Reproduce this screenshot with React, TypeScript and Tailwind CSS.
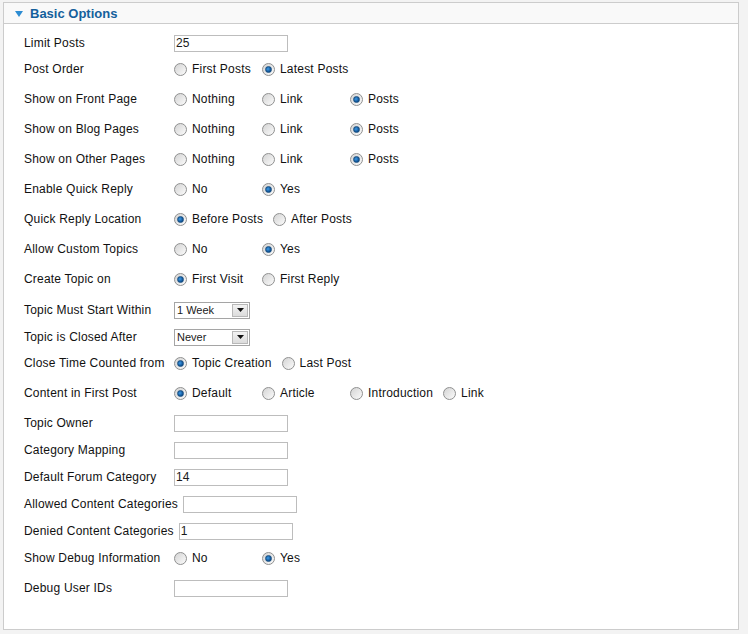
import React from "react";

type Row =
  | { label: string; kind: "text"; value?: string; h: string }
  | { label: string; kind: "select"; value: string; h: string }
  | { label: string; kind: "radio"; options: string[]; checked: number; h: string };

const ROWS: Row[] = [
  { label: "Limit Posts", kind: "text", value: "25", h: "h-[26px]" },
  { label: "Post Order", kind: "radio", options: ["First Posts", "Latest Posts"], checked: 1, h: "h-[30px]" },
  { label: "Show on Front Page", kind: "radio", options: ["Nothing", "Link", "Posts"], checked: 2, h: "h-[30px]" },
  { label: "Show on Blog Pages", kind: "radio", options: ["Nothing", "Link", "Posts"], checked: 2, h: "h-[30px]" },
  { label: "Show on Other Pages", kind: "radio", options: ["Nothing", "Link", "Posts"], checked: 2, h: "h-[30px]" },
  { label: "Enable Quick Reply", kind: "radio", options: ["No", "Yes"], checked: 1, h: "h-[30px]" },
  { label: "Quick Reply Location", kind: "radio", options: ["Before Posts", "After Posts"], checked: 0, h: "h-[30px]" },
  { label: "Allow Custom Topics", kind: "radio", options: ["No", "Yes"], checked: 1, h: "h-[30px]" },
  { label: "Create Topic on", kind: "radio", options: ["First Visit", "First Reply"], checked: 0, h: "h-[31px]" },
  { label: "Topic Must Start Within", kind: "select", value: "1 Week", h: "h-[27px]" },
  { label: "Topic is Closed After", kind: "select", value: "Never", h: "h-[26px]" },
  { label: "Close Time Counted from", kind: "radio", options: ["Topic Creation", "Last Post"], checked: 0, h: "h-[30px]" },
  { label: "Content in First Post", kind: "radio", options: ["Default", "Article", "Introduction", "Link"], checked: 0, h: "h-[30px]" },
  { label: "Topic Owner", kind: "text", h: "h-[27px]" },
  { label: "Category Mapping", kind: "text", h: "h-[27px]" },
  { label: "Default Forum Category", kind: "text", value: "14", h: "h-[27px]" },
  { label: "Allowed Content Categories", kind: "text", h: "h-[27px]" },
  { label: "Denied Content Categories", kind: "text", value: "1", h: "h-[27px]" },
  { label: "Show Debug Information", kind: "radio", options: ["No", "Yes"], checked: 1, h: "h-[30px]" },
  { label: "Debug User IDs", kind: "text", h: "h-[30px]" },
];

function Radio({ checked }: { checked: boolean }) {
  return (
    <span className="relative w-[13px] h-[13px] rounded-full border border-[#8f9090] bg-gradient-to-br from-[#d4d4d4] to-[#fbfbfb] shrink-0 flex items-center justify-center">
      {checked && (
        <span className="w-[7px] h-[7px] rounded-full bg-[radial-gradient(circle_at_40%_40%,#3f9be6,#0d4f91_70%)] border border-[#1a4f80]" />
      )}
    </span>
  );
}

function Field({ row }: { row: Row }) {
  if (row.kind === "text") {
    return (
      <div className="w-[114px] h-[17px] border border-[#bdbdbd] bg-white text-[12px] leading-[15px] pl-[1px] text-[#1a1a1a] tracking-normal">
        {row.value}
      </div>
    );
  }
  if (row.kind === "select") {
    return (
      <div className="w-[76px] h-[17px] border border-[#a5a5a5] bg-white flex items-center text-[11px] text-[#1a1a1a] tracking-normal">
        <span className="flex-1 pl-[2px] leading-[15px]">{row.value}</span>
        <span className="w-[16px] h-[13px] mr-[1px] border border-[#b8b8b8] bg-gradient-to-b from-[#f2f2f2] to-[#dcdcdc] flex items-center justify-center">
          <svg width="7" height="4" viewBox="0 0 7 4">
            <path d="M0 0h7L3.5 4z" fill="#111" />
          </svg>
        </span>
      </div>
    );
  }
  return (
    <div className="flex items-center">
      {row.options.map((o, i) => (
        <label key={o} className="flex items-center min-w-[88px] pr-[10px]">
          <Radio checked={i === row.checked} />
          <span className="ml-[5px]">{o}</span>
        </label>
      ))}
    </div>
  );
}

export default function App() {
  return (
    <div
      className="w-[748px] h-[634px] bg-[#f3f3f3] pt-[2px] pl-[3px] text-[12px] text-[#111] tracking-[0.2px]"
      style={{ fontFamily: '"Liberation Sans", Arial, sans-serif' }}
    >
      <div className="w-[736px] h-[628px] border border-[#cccccc] bg-white flex flex-col">
        <div className="h-[21px] bg-[#f9f9f9] border-b border-[#cccccc] flex items-center pl-[11px]">
          <svg width="8" height="6" viewBox="0 0 8 6" className="mr-[7px] mt-[1px]">
            <path d="M0 0h8L4 6z" fill="#2d8cd2" />
          </svg>
          <span className="text-[13px] font-bold text-[#14609c] mt-[1px] tracking-normal">Basic Options</span>
        </div>
        <div className="pt-[6px] pl-[20px] flex flex-col">
          {ROWS.map((r) => (
            <div key={r.label} className={`${r.h} flex items-start`}>
              <div className="h-[26px] flex items-center">
                <span className="min-w-[150px] pr-[5px]">{r.label}</span>
                <Field row={r} />
              </div>
            </div>
          ))}
        </div>
      </div>
    </div>
  );
}
